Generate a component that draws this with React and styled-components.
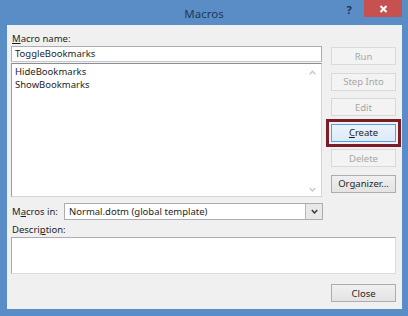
import React from "react";
import styled, { createGlobalStyle, css } from "styled-components";

const Global = createGlobalStyle`
  html, body { margin: 0; padding: 0; background: #5a8cc4; }
  body { font-family: "Noto Sans", "Open Sans", sans-serif; }
`;

const Window = styled.div`
  width: 408px;
  height: 316px;
  background: #5a8dc5;
  display: flex;
  flex-direction: column;
  box-sizing: border-box;
  overflow: hidden;
`;

const TitleBar = styled.div`
  height: 25px;
  display: grid;
  grid-template-columns: 1fr auto 1fr;
  align-items: start;
  flex-shrink: 0;
`;

const Title = styled.div`
  grid-column: 2;
  font-size: 11.5px;
  color: #1d3a5e;
  padding-top: 6px;
  line-height: 15px;
`;

const Controls = styled.div`
  grid-column: 3;
  justify-self: end;
  display: flex;
  align-items: flex-start;
  margin-right: 6px;
`;

const Help = styled.div`
  font-family: "Noto Sans", sans-serif;
  font-weight: 700;
  font-size: 11px;
  color: #1b3556;
  width: 14px;
  text-align: center;
  line-height: 12px;
  padding-top: 4px;
  margin-right: 8px;
`;

const CloseX = styled.div`
  width: 38px;
  height: 17px;
  background: #c75050;
  display: flex;
  align-items: center;
  justify-content: center;
`;

const Body = styled.div`
  flex: 1;
  margin: 0 6px 7px 7px;
  background: #f0f0f0;
  padding: 6px 6px 0 4px;
  display: flex;
  flex-direction: column;
  font-size: 9.5px;
  color: #1e1e1e;
`;

const Top = styled.div`
  display: flex;
  gap: 9px;
`;

const LeftCol = styled.div`
  width: 311px;
  display: flex;
  flex-direction: column;
`;

const RightCol = styled.div`
  width: 65px;
  padding-top: 16px;
  display: flex;
  flex-direction: column;
  gap: 7.5px;
`;

const Label = styled.div`
  height: 15px;
  line-height: 15px;
  padding-left: 1px;
  white-space: nowrap;
`;

const U = styled.span`
  text-decoration: underline;
  text-underline-offset: 1px;
`;

const NameInput = styled.div`
  height: 16px;
  box-sizing: border-box;
  border: 1px solid #abadb3;
  border-bottom-color: #c8c8c8;
  background: #fff;
  line-height: 14px;
  padding-left: 3px;
`;

const ListBox = styled.div`
  height: 134px;
  margin-top: 1px;
  box-sizing: border-box;
  border: 1px solid #9a9ea6;
  border-top-color: #8a8e96;
  border-right-color: #d6d6d6;
  border-bottom-color: #d6d6d6;
  background: #fff;
  display: flex;
`;

const Items = styled.div`
  flex: 1;
  padding: 1px 0 0 3px;
  line-height: 13px;
`;

const ScrollBar = styled.div`
  width: 17px;
  display: flex;
  flex-direction: column;
  justify-content: space-between;
  align-items: center;
  padding: 6px 0 4px;
`;

const Chevron = ({ up, color = "#c8c8c8", w = 7 }) => (
  <svg width={w} height="5" viewBox="0 0 7 5">
    <path
      d={up ? "M0.8 4.2 L3.5 1.3 L6.2 4.2" : "M0.8 1 L3.5 3.9 L6.2 1"}
      fill="none"
      stroke={color}
      strokeWidth="1.4"
    />
  </svg>
);

const Button = styled.div`
  height: 18px;
  box-sizing: border-box;
  display: flex;
  align-items: center;
  justify-content: center;
  white-space: nowrap;
  ${(p) =>
    p.$disabled
      ? css`
          border: 1px solid #d9d9d9;
          background: #f3f3f3;
          color: #a6a6a6;
        `
      : p.$focused
      ? css`
          border: 1px solid #5a9fe0;
          background: linear-gradient(#e9f3fc, #dcebfa);
          color: #1e1e1e;
          outline: 3px solid #7b1c27;
          outline-offset: 2px;
        `
      : css`
          border: 1px solid #adadad;
          background: linear-gradient(#f0f0f0, #e3e3e3);
          color: #1e1e1e;
        `}
`;

const MacrosRow = styled.div`
  display: flex;
  align-items: center;
  margin-top: 6px;
  height: 17px;
`;

const RowLabel = styled.div`
  width: 52px;
  padding-left: 1px;
  white-space: nowrap;
`;

const Select = styled.div`
  width: 259px;
  height: 17px;
  box-sizing: border-box;
  border: 1px solid #abadb3;
  background: #fff;
  display: flex;
  align-items: stretch;
`;

const SelectText = styled.div`
  flex: 1;
  line-height: 15px;
  padding-left: 4px;
`;

const SelectBtn = styled.div`
  width: 16px;
  border-left: 1px solid #b8b8b8;
  background: #e8e8e8;
  display: flex;
  align-items: center;
  justify-content: center;
`;

const DescLabel = styled(Label)`
  margin-top: 2px;
`;

const DescBox = styled.div`
  height: 37px;
  box-sizing: border-box;
  border: 1px solid #abadb3;
  border-right-color: #dcdcdc;
  border-bottom-color: #dcdcdc;
  background: #fff;
`;

const Footer = styled.div`
  display: flex;
  justify-content: flex-end;
  margin-top: 10px;
`;

const FooterButton = styled(Button)`
  width: 65px;
`;

export default function App() {
  return (
    <>
      <Global />
      <Window>
        <TitleBar>
          <Title>Macros</Title>
          <Controls>
            <Help>?</Help>
            <CloseX>
              <svg width="9" height="8" viewBox="0 0 9 8">
                <path d="M1.5 1 L7.5 7 M7.5 1 L1.5 7" stroke="#fff" strokeWidth="2" />
              </svg>
            </CloseX>
          </Controls>
        </TitleBar>
        <Body>
          <Top>
            <LeftCol>
              <Label>
                <U>M</U>acro name:
              </Label>
              <NameInput>ToggleBookmarks</NameInput>
              <ListBox>
                <Items>
                  <div>HideBookmarks</div>
                  <div>ShowBookmarks</div>
                </Items>
                <ScrollBar>
                  <Chevron up />
                  <Chevron />
                </ScrollBar>
              </ListBox>
            </LeftCol>
            <RightCol>
              <Button $disabled>Run</Button>
              <Button $disabled>Step Into</Button>
              <Button $disabled>Edit</Button>
              <Button $focused>
                <U>C</U>reate
              </Button>
              <Button $disabled>Delete</Button>
              <Button>
                Or<U>g</U>anizer...
              </Button>
            </RightCol>
          </Top>
          <MacrosRow>
            <RowLabel>
              M<U>a</U>cros in:
            </RowLabel>
            <Select>
              <SelectText>Normal.dotm (global template)</SelectText>
              <SelectBtn>
                <Chevron color="#333" />
              </SelectBtn>
            </Select>
          </MacrosRow>
          <DescLabel>
            Descri<U>p</U>tion:
          </DescLabel>
          <DescBox />
          <Footer>
            <FooterButton>Close</FooterButton>
          </Footer>
        </Body>
      </Window>
    </>
  );
}
